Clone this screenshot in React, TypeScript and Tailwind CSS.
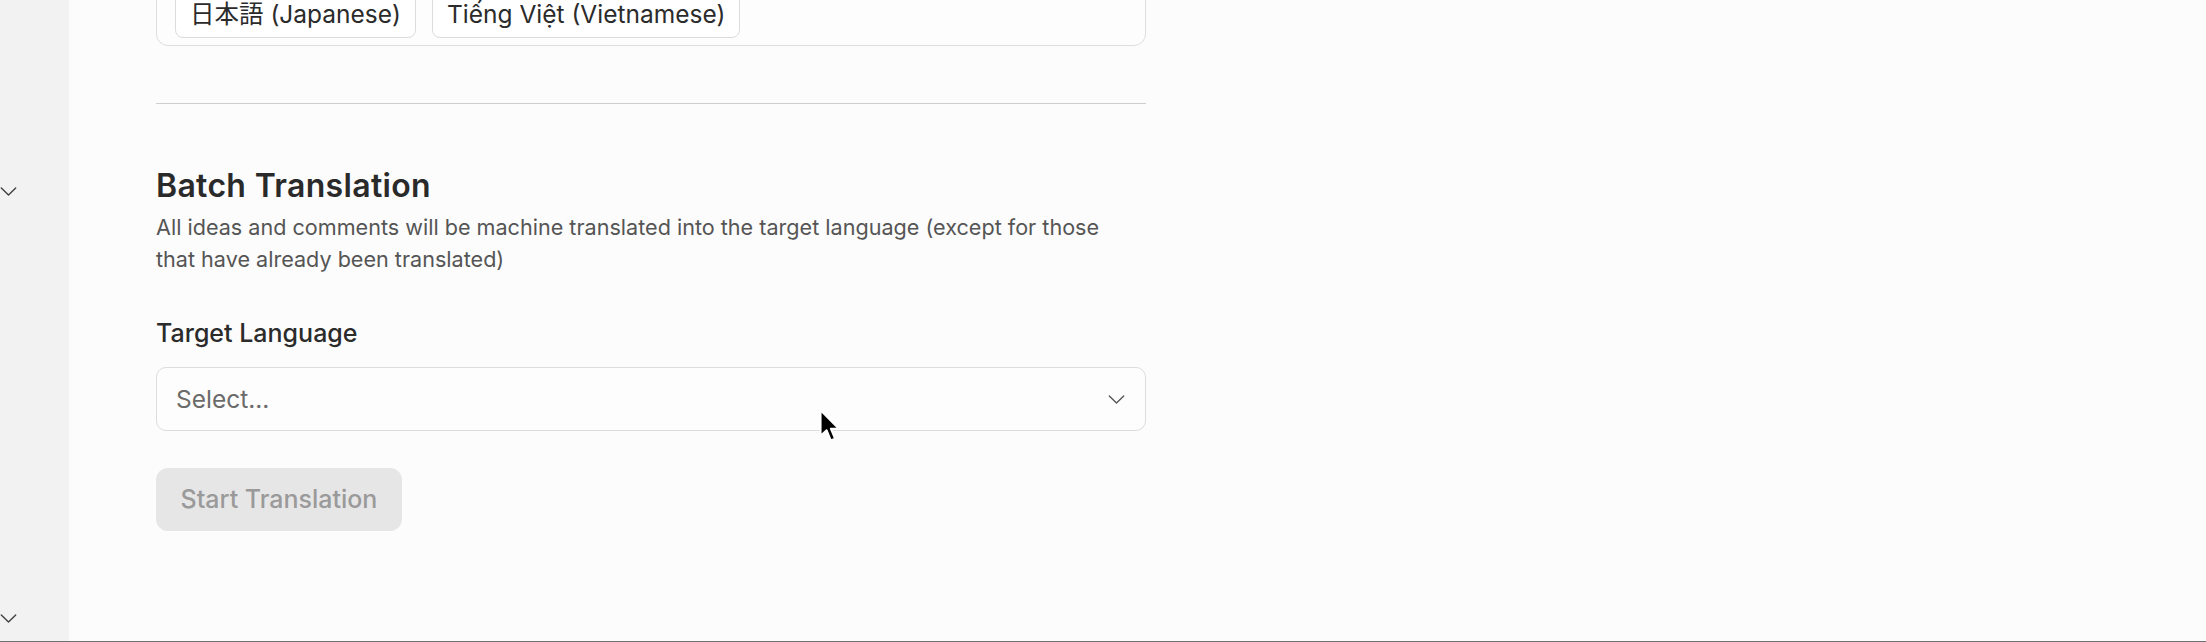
import { useState } from 'react'

function Chevron({ className }: { className?: string }) {
  return (
    <svg viewBox="0 0 18 10" className={className} fill="none">
      <path d="M1 1l8 8 8-8" stroke="currentColor" strokeWidth="1.5" strokeLinecap="round" strokeLinejoin="round" />
    </svg>
  )
}

function Cursor() {
  return (
    <svg
      viewBox="0 0 20 30"
      className="absolute left-[817px] top-[408px] w-[24px] h-[36px] pointer-events-none"
    >
      <path
        d="M3 2 L3 23 L8 18.5 L11.5 27 L15 25.5 L11.5 17.2 L18 17.2 Z"
        fill="#000"
        stroke="#fff"
        strokeWidth="1.6"
        strokeLinejoin="round"
      />
    </svg>
  )
}

const languages = ['日本語 (Japanese)', 'Tiếng Việt (Vietnamese)']

export default function App() {
  const [target, setTarget] = useState('')

  return (
    <div className="relative flex h-[642px] w-full overflow-hidden border-b border-[#6f6f6f] bg-[#fcfcfc] font-['Inter','Noto_Sans_CJK_JP',sans-serif] text-[#2b2b2b]">
      {/* left rail */}
      <div className="flex w-[69px] shrink-0 flex-col bg-[#f2f2f2] text-[#3f3f3f]">
        <Chevron className="mt-[187px] h-[9px] w-[17px]" />
        <Chevron className="mt-[418px] h-[9px] w-[17px]" />
      </div>

      {/* settings column */}
      <div className="flex-1 pl-[87px]">
        <div className="-mt-[19px] flex w-[990px] flex-col">
          <div className="rounded-xl border border-[#dedede] bg-[#fdfdfd] px-[18px] pb-[7px] pt-[8px]">
            <div className="flex flex-wrap gap-4">
              {languages.map((l) => (
                <span
                  key={l}
                  className="flex h-[48px] items-center rounded-lg border border-[#dcdcdc] bg-white px-[14px] text-[24.5px] text-[#2b2b2b]"
                >
                  {l}
                </span>
              ))}
            </div>
          </div>

          <div className="mt-[57px] h-px bg-[#cfcfcf]" />

          <h2 className="mt-[64px] text-[32px] font-semibold leading-[36px] tracking-[0.01em] text-[#2a2a2a]">
            Batch Translation
          </h2>
          <p className="mt-[7px] max-w-[950px] text-[21.6px] leading-[32px] text-[#555]">
            All ideas and comments will be machine translated into the target language (except for those
            that have already been translated)
          </p>

          <label className="mt-[42px] text-[25px] font-medium leading-[32px] text-[#2b2b2b]">
            Target Language
          </label>

          <button
            onClick={() => setTarget(target)}
            className="mt-[18px] flex h-[64px] items-center justify-between rounded-[10px] border border-[#dcdcdc] bg-[#fdfdfd] pl-[19px] pr-[20px] text-left"
          >
            <span className="text-[24.5px] text-[#6b6b6b]">{target || 'Select...'}</span>
            <Chevron className="h-[9px] w-[17px] text-[#555]" />
          </button>

          <div className="mt-[37px]">
            <button
              disabled
              className="h-[63px] w-[246px] rounded-xl bg-[#e6e6e6] text-[25px] font-medium text-[#9a9a9a]"
            >
              Start Translation
            </button>
          </div>
        </div>
      </div>

      <Cursor />
    </div>
  )
}
